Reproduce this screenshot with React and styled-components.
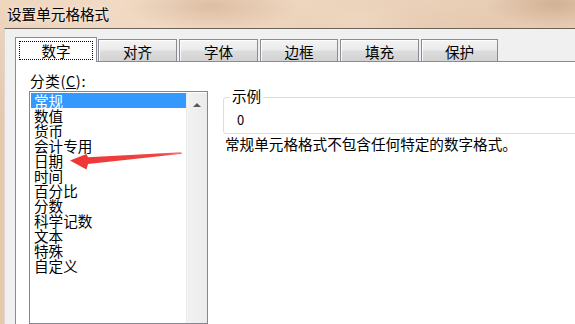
import React from "react";
import styled, { createGlobalStyle } from "styled-components";

const GlobalStyle = createGlobalStyle`
  html, body { margin: 0; padding: 0; }
  body { background: #e4c5a8; }
  * { box-sizing: border-box; }
`;

const FONT = `"Noto Sans CJK SC", "Noto Sans", sans-serif`;

const Window = styled.div`
  position: relative;
  width: 575px;
  height: 324px;
  overflow: hidden;
  display: flex;
  flex-direction: column;
  font-family: ${FONT};
  font-size: 14.6px;
  color: #000;
  background:
    radial-gradient(ellipse 90px 26px at 210px 6px, rgba(196, 156, 124, 0.45), transparent),
    radial-gradient(ellipse 70px 24px at 555px 4px, rgba(186, 146, 114, 0.5), transparent),
    radial-gradient(ellipse 60px 20px at 360px 22px, rgba(240, 220, 200, 0.5), transparent),
    linear-gradient(180deg, rgba(255, 240, 225, 0.35) 0, rgba(255, 240, 225, 0) 120px),
    linear-gradient(90deg, #e6c8ad 0%, #ecd2b9 30%, #e3c4a8 60%, #dcbc9f 85%, #e0c0a3 100%);
`;

const TitleBar = styled.div`
  height: 28px;
  flex: none;
  display: flex;
  align-items: center;
  padding: 0 0 2px 7px;
  line-height: 15px;
  text-shadow: 0 0 6px rgba(255, 255, 255, 0.8);
`;

const Frame = styled.div`
  flex: 1;
  width: 720px;
  margin-left: 4px;
  display: flex;
  flex-direction: column;
  background: #f0f0f0;
  border-top: 1px solid #6b625a;
  border-left: 1px solid #dcd6d0;
  padding: 8px 0 0 10px;
`;

const TabRow = styled.div`
  display: flex;
  align-items: flex-end;
  height: 25px;
  flex: none;
  border-bottom: 1px solid #898c95;
`;

const Tab = styled.div`
  position: relative;
  width: ${(p) => p.$w}px;
  margin-left: ${(p) => p.$ml}px;
  display: flex;
  align-items: center;
  justify-content: center;
  line-height: 15px;
  border: 1px solid #898c95;
  border-bottom: none;
  ${(p) =>
    p.$active
      ? `
    height: 25px;
    margin-bottom: -1px;
    z-index: 1;
    background: #fff;
    padding: 3px 3px 2px;
  `
      : `
    height: 22px;
    padding-top: 1px;
    background: linear-gradient(180deg, #f3f3f3 0%, #ebebeb 45%, #dcdcdc 55%, #d2d2d2 100%);
    box-shadow: inset 1px 1px 0 rgba(255,255,255,0.8);
  `}
`;

const FocusBox = styled.span`
  flex: 1;
  align-self: stretch;
  display: flex;
  align-items: center;
  justify-content: center;
  border: 1px dotted #000;
`;

const Panel = styled.div`
  flex: 1;
  display: flex;
  background: #fff;
  border-left: 1px solid #898c95;
  padding: 11px 0 0 13px;
`;

const LeftCol = styled.div`
  width: 179px;
  flex: none;
  display: flex;
  flex-direction: column;
`;

const Label = styled.div`
  line-height: 15px;
  padding-left: 1px;
  margin-bottom: 3px;
  letter-spacing: 0.6px;
`;

const ListBox = styled.div`
  flex: 1;
  display: flex;
  border: 1px solid #828790;
  padding: 1px 0 0 1px;
`;

const Items = styled.div`
  flex: 1;
  display: flex;
  flex-direction: column;
`;

const Item = styled.div`
  height: 15px;
  line-height: 15px;
  padding-left: 3px;
  white-space: nowrap;
  background: ${(p) => (p.$selected ? "#3399ff" : "transparent")};
  color: ${(p) => (p.$selected ? "#fff" : "#000")};
`;

const ScrollBar = styled.div`
  width: 21px;
  flex: none;
  display: flex;
  flex-direction: column;
  background: linear-gradient(90deg, #e2e2e2 0, #f4f4f4 1px, #f1f1f1 3px, #ebebeb 100%);
`;

const ScrollUp = styled.div`
  height: 20px;
  display: flex;
  justify-content: center;
  padding-top: 10px;
`;

const Triangle = styled.span`
  width: 0;
  height: 0;
  margin-left: 1px;
  border-left: 4.5px solid transparent;
  border-right: 4.5px solid transparent;
  border-bottom: 4px solid #5a5a5a;
`;

const RightCol = styled.div`
  width: 420px;
  flex: none;
  margin-left: 15px;
  padding-top: 15px;
  display: flex;
  flex-direction: column;
`;

const Group = styled.fieldset`
  margin: 0;
  padding: 0 0 6px 6px;
  border: 1px solid #d5dfe5;
  border-radius: 3px;
  min-width: 0;
`;

const Legend = styled.legend`
  padding: 0 2px 4px;
  line-height: 15px;
`;

const Sample = styled.div`
  margin-top: 5px;
  padding-left: 7px;
  line-height: 15px;
  font-size: 13px;
`;

const Description = styled.div`
  margin-top: 2px;
  padding-left: 2px;
  line-height: 15px;
  white-space: nowrap;
`;

const Overlay = styled.svg`
  position: absolute;
  left: 0;
  top: 0;
  width: 575px;
  height: 324px;
  pointer-events: none;
`;

const tabs = [
  { label: "数字", w: 82, ml: 0, active: true },
  { label: "对齐", w: 79, ml: 1 },
  { label: "字体", w: 79, ml: 2 },
  { label: "边框", w: 78, ml: 2 },
  { label: "填充", w: 79, ml: 2 },
  { label: "保护", w: 77, ml: 2 },
];

const categories = [
  "常规",
  "数值",
  "货币",
  "会计专用",
  "日期",
  "时间",
  "百分比",
  "分数",
  "科学记数",
  "文本",
  "特殊",
  "自定义",
];

export default function App() {
  return (
    <>
      <GlobalStyle />
      <Window>
        <TitleBar>设置单元格格式</TitleBar>
        <Frame>
          <TabRow>
            {tabs.map((t) => (
              <Tab key={t.label} $w={t.w} $ml={t.ml} $active={t.active}>
                {t.active ? <FocusBox>{t.label}</FocusBox> : t.label}
              </Tab>
            ))}
          </TabRow>
          <Panel>
            <LeftCol>
              <Label>
                分类(<u>C</u>):
              </Label>
              <ListBox>
                <Items>
                  {categories.map((c, i) => (
                    <Item key={c} $selected={i === 0}>
                      {c}
                    </Item>
                  ))}
                </Items>
                <ScrollBar>
                  <ScrollUp>
                    <Triangle />
                  </ScrollUp>
                </ScrollBar>
              </ListBox>
            </LeftCol>
            <RightCol>
              <Group>
                <Legend>示例</Legend>
                <Sample>0</Sample>
              </Group>
              <Description>常规单元格格式不包含任何特定的数字格式。</Description>
            </RightCol>
          </Panel>
        </Frame>
        <Overlay viewBox="0 0 575 324">
          <defs>
            <linearGradient id="arrowFade" x1="70" y1="0" x2="182" y2="0" gradientUnits="userSpaceOnUse">
              <stop offset="0" stopColor="#ee3535" />
              <stop offset="0.8" stopColor="#f04444" />
              <stop offset="1" stopColor="#f47a7a" />
            </linearGradient>
          </defs>
          <polygon
            points="70,160.5 86.5,154 88,157.3 181,152.3 182.5,153.8 88,164 86.5,169.5"
            fill="url(#arrowFade)"
          />
        </Overlay>
      </Window>
    </>
  );
}
